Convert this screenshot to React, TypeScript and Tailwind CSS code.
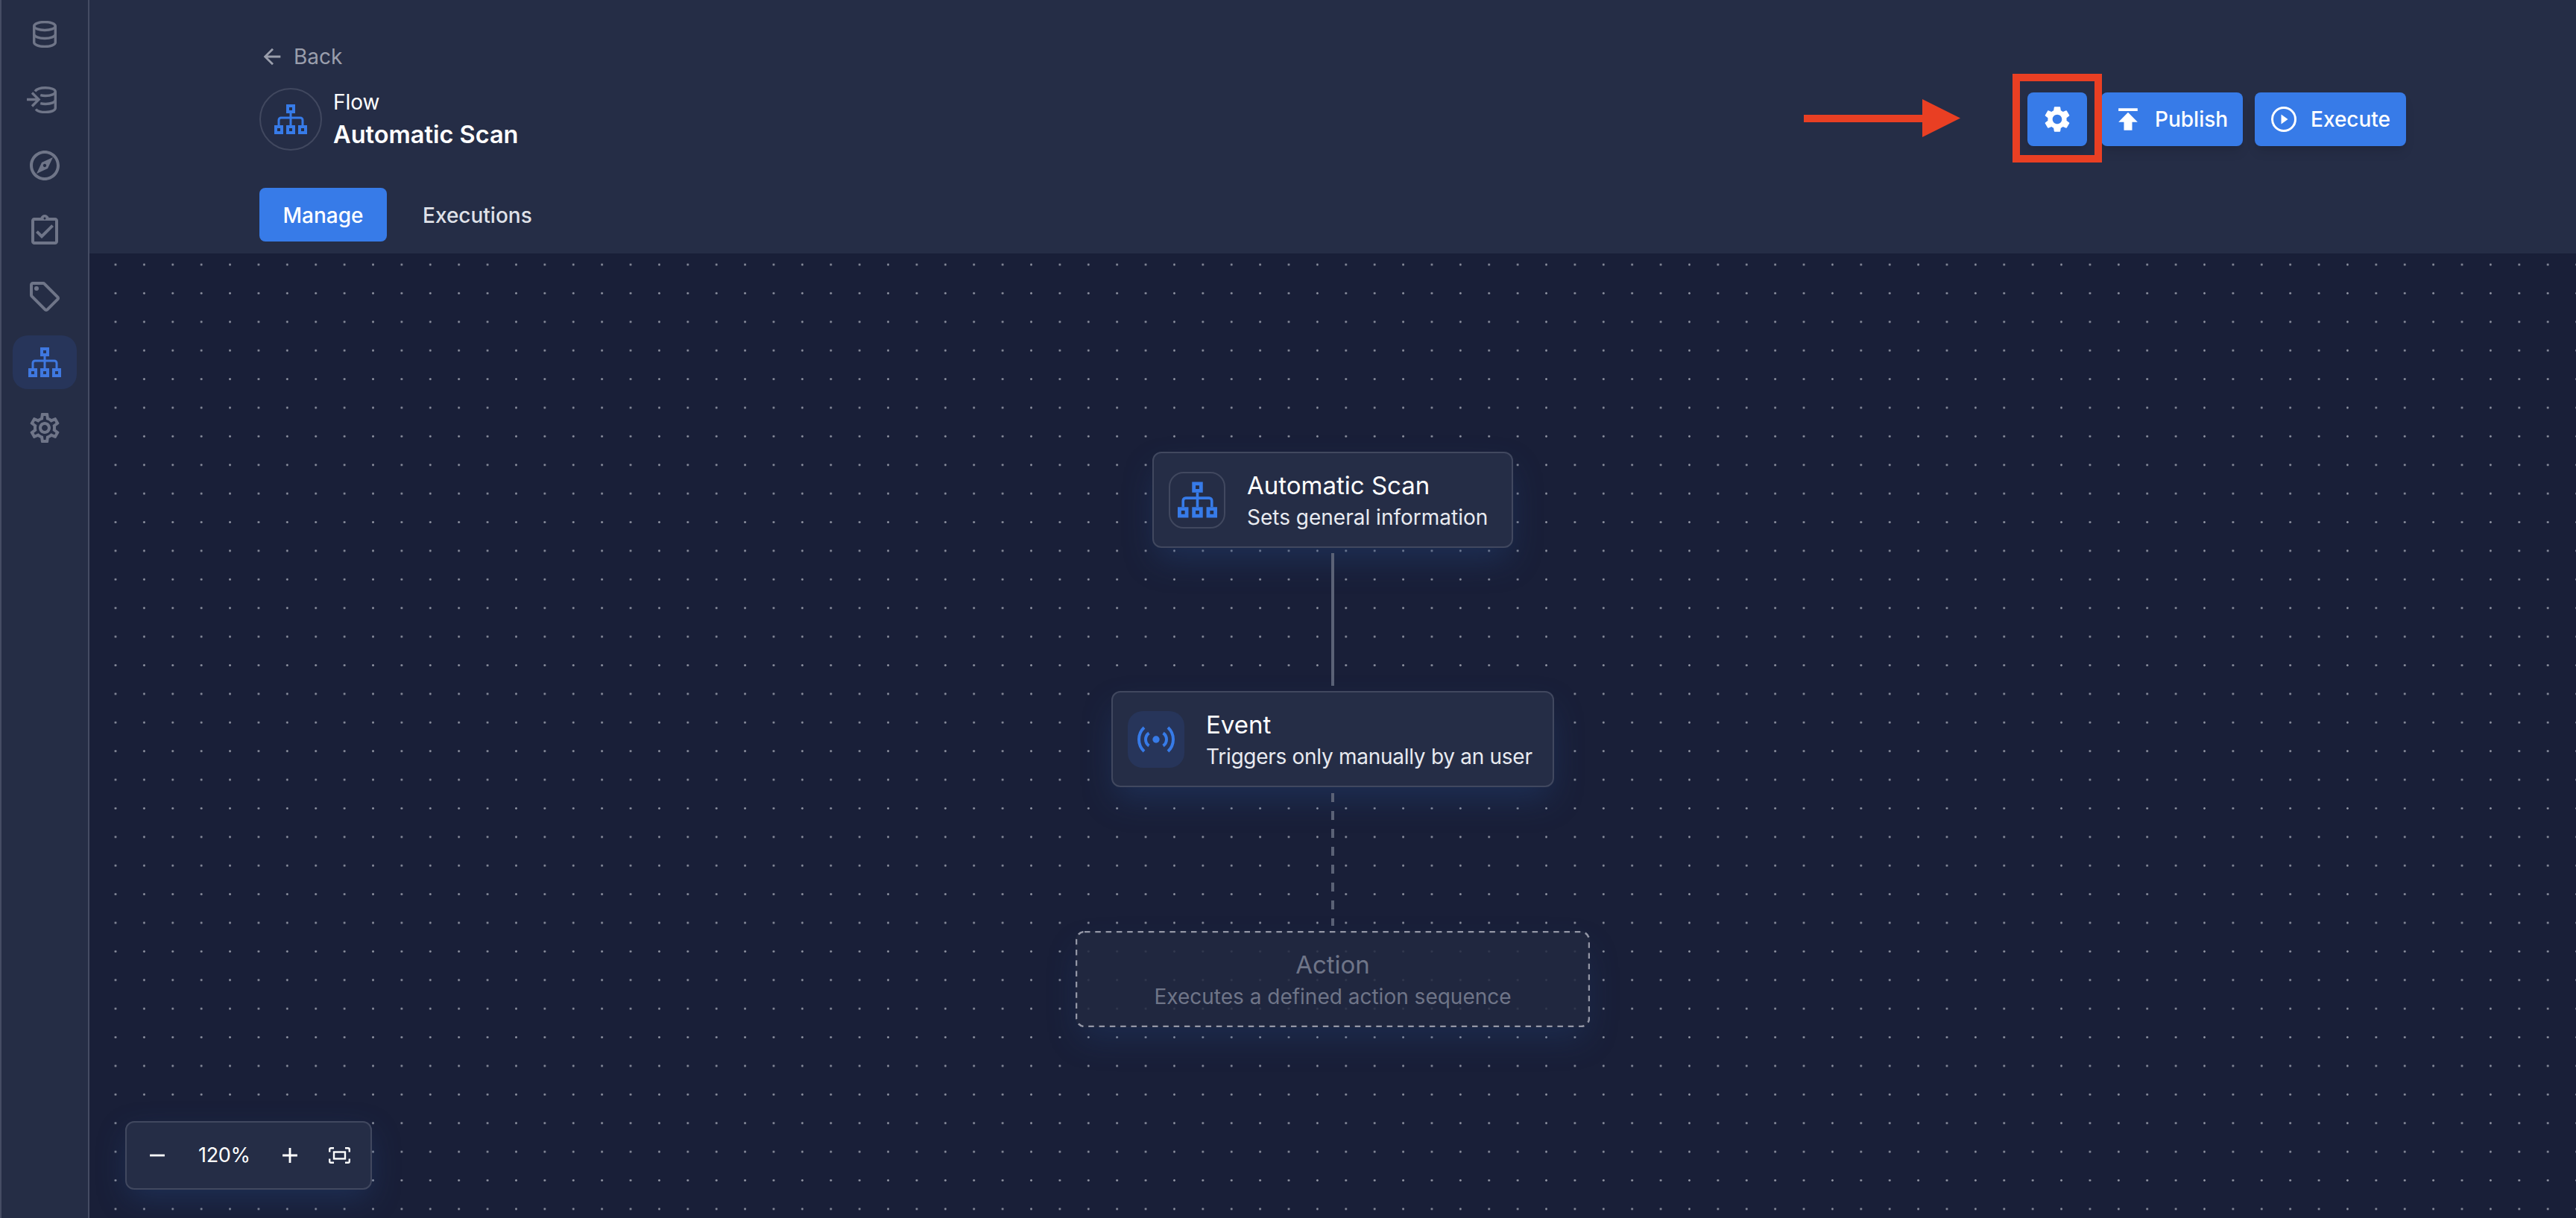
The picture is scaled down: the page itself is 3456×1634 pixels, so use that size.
import {
  MdAdd,
  MdArrowBack,
  MdOutlineAssignmentTurnedIn,
  MdOutlineExplore,
  MdOutlineLocalOffer,
  MdOutlineSettings,
  MdPublish,
  MdRemove,
  MdSettings,
} from "react-icons/md";

function TreeIcon({ className }: { className?: string }) {
  return (
    <svg viewBox="0 0 44 40" className={className} fill="currentColor">
      <path
        fillRule="evenodd"
        d="M16 0h12v12H16zM20 4v4h4V4zM0 28h12v12H0zM4 32v4h4v-4zM16 28h12v12H16zM20 32v4h4v-4zM32 28h12v12H32zM36 32v4h4v-4z"
      />
      <path
        d="M22 12v16M6 28v-7a3 3 0 0 1 3-3h26a3 3 0 0 1 3 3v7"
        fill="none"
        stroke="currentColor"
        strokeWidth="3"
      />
    </svg>
  );
}

function DatabaseIcon({ className }: { className?: string }) {
  return (
    <svg viewBox="0 0 32 36" className={className} fill="none" stroke="currentColor" strokeWidth="3.4">
      <ellipse cx="16" cy="7" rx="14.300" ry="5.500" />
      <path d="M1.700 7v22c0 3 6.400 5.500 14.300 5.500S30.300 32 30.300 29V7" />
      <path d="M1.700 18c0 3 6.400 5.500 14.300 5.500S30.300 21 30.300 18" />
    </svg>
  );
}

function DatabaseInIcon({ className }: { className?: string }) {
  return (
    <svg viewBox="0 0 40 36" className={className} fill="none" stroke="currentColor" strokeWidth="3.4">
      <path d="M11 6.500C13 3.500 18 1.700 25 1.700c7.800 0 13.300 2.400 13.300 5.300S32.800 12.500 25 12.500c-2.600 0-4.800-.3-6.800-.8" />
      <path d="M38.300 7v22c0 3-5.500 5.500-13.300 5.500-6 0-11-1.500-13-4" />
      <path d="M38.300 18c0 3-5.500 5.500-13.300 5.500-2.400 0-4.800-.3-6.800-.8" />
      <path d="M0 17.500h15.500M7 8.500l9 9-9 9" />
    </svg>
  );
}

function PlayCircleIcon({ className }: { className?: string }) {
  return (
    <svg viewBox="0 0 34 34" className={className}>
      <circle cx="17" cy="17" r="15.500" fill="none" stroke="currentColor" strokeWidth="3" />
      <path d="M13.500 10.500v13l9-6.500z" fill="currentColor" />
    </svg>
  );
}

function SignalIcon({ className }: { className?: string }) {
  return (
    <svg viewBox="-25 -18 50 36" className={className} fill="none" stroke="currentColor" strokeWidth="4">
      <circle cx="0" cy="0" r="4.700" fill="currentColor" stroke="none" />
      <path d="M-16 -16A21.800 21.800 0 0 0 -16 16M16 -16A21.800 21.800 0 0 1 16 16" />
      <path d="M-9.500 -8.500A10.300 10.300 0 0 0 -9.500 8.500M9.500 -8.500A10.300 10.300 0 0 1 9.500 8.500" />
    </svg>
  );
}

function FocusIcon({ className }: { className?: string }) {
  return (
    <svg viewBox="0 0 29 22" className={className} fill="none" stroke="currentColor" strokeWidth="2.400">
      <path d="M1.200 6.500V3a1.800 1.800 0 0 1 1.800-1.800h4M22 1.200h4A1.800 1.800 0 0 1 27.800 3v3.500M27.800 15.500V19a1.800 1.800 0 0 1-1.800 1.800h-4M7 20.800H3A1.800 1.800 0 0 1 1.200 19v-3.500" />
      <rect x="7" y="6.500" width="15" height="9" />
    </svg>
  );
}

function NavItem({ children, active }: { children: React.ReactNode; active?: boolean }) {
  return (
    <div
      className={
        active
          ? "flex h-[72px] w-[86px] items-center justify-center rounded-[20px] bg-[#27355a] text-[#3f78e0]"
          : "flex h-[72px] w-[86px] items-center justify-center text-[#6f7588]"
      }
    >
      {children}
    </div>
  );
}

function Sidebar() {
  return (
    <aside className="flex h-full w-[120px] shrink-0 flex-col items-center gap-4 border-x-2 border-[#454c63] bg-[#252d45] pt-2.5">
      <NavItem>
        <DatabaseIcon className="h-9 w-8" />
      </NavItem>
      <NavItem>
        <DatabaseInIcon className="h-9 w-10 -translate-x-1" />
      </NavItem>
      <NavItem>
        <MdOutlineExplore size={48} />
      </NavItem>
      <NavItem>
        <MdOutlineAssignmentTurnedIn size={48} />
      </NavItem>
      <NavItem>
        <MdOutlineLocalOffer size={48} />
      </NavItem>
      <NavItem active>
        <TreeIcon className="h-10 w-11" />
      </NavItem>
      <NavItem>
        <MdOutlineSettings size={48} />
      </NavItem>
    </aside>
  );
}

function Header() {
  return (
    <header className="flex h-[340px] items-start justify-between bg-[#252d46] px-[228px]">
      <div className="pt-[56px]">
        <div className="flex h-10 items-center gap-[12px] text-[28px] text-[#9a9eac]">
          <MdArrowBack size={34} />
          <span>Back</span>
        </div>
        <div className="mt-[22px] flex items-center gap-[15px]">
          <div className="flex size-[84px] items-center justify-center rounded-full border-2 border-[#41485f] text-[#377be8]">
            <TreeIcon className="h-10 w-11" />
          </div>
          <div>
            <div className="text-[28px] leading-[38px] text-white">Flow</div>
            <div className="mt-1 text-[32.500px] leading-[42px] font-semibold text-white">Automatic Scan</div>
          </div>
        </div>
        <div className="mt-[50px] flex items-center gap-[48px]">
          <button className="h-[72px] w-[171px] rounded-lg bg-[#377be8] pt-0.5 text-[28px] font-medium text-white">
            Manage
          </button>
          <span className="pt-0.5 text-[28px] font-medium text-[#dfe1e8]">Executions</span>
        </div>
      </div>
      <div className="mt-[124px] flex items-center">
        <button className="flex h-[72px] w-20 items-center justify-center rounded-lg bg-[#377be8] text-white shadow-lg">
          <MdSettings size={42} />
        </button>
        <button className="ml-[19px] flex h-[72px] w-[190px] items-center gap-[14px] rounded-lg bg-[#377be8] pl-[14px] text-[28px] font-medium text-white shadow-lg">
          <MdPublish size={44} />
          Publish
        </button>
        <button className="ml-4 flex h-[72px] w-[203px] items-center gap-[19px] rounded-lg bg-[#377be8] pl-[22px] text-[28px] font-medium text-white shadow-lg">
          <PlayCircleIcon className="size-[34px]" />
          Execute
        </button>
      </div>
    </header>
  );
}

function Node({
  icon,
  title,
  subtitle,
  className,
  subtitleClassName,
}: {
  icon: React.ReactNode;
  title: string;
  subtitle: string;
  className: string;
  subtitleClassName?: string;
}) {
  return (
    <div
      className={`flex h-[129px] items-center gap-[29px] rounded-xl border-2 border-[#41485f] bg-[#252d46] pl-5 shadow-[0_20px_44px_-6px_rgba(38,72,130,0.4)] ${className}`}
    >
      {icon}
      <div>
        <div className="text-[33px] leading-[44px] text-white">{title}</div>
        <div className={`mt-0.5 text-[28px] leading-[38px] text-[#e8eaf0] ${subtitleClassName ?? ""}`}>{subtitle}</div>
      </div>
    </div>
  );
}

function ActionNode() {
  return (
    <div className="relative flex h-[129px] w-[690px] flex-col items-center justify-center rounded-xl bg-[#222941]/85 shadow-[0_20px_44px_-6px_rgba(38,72,130,0.3)]">
      <svg className="absolute inset-0 size-full" viewBox="0 0 690 129" fill="none">
        <rect x="1" y="1" width="688" height="127" rx="11" stroke="#9497a6" strokeWidth="2.500" strokeDasharray="7.500 6.800" />
      </svg>
      <div className="text-[33px] leading-[44px] text-[#6f7588]">Action</div>
      <div className="mt-0.5 text-[28px] leading-[38px] text-[#6f7588]">Executes a defined action sequence</div>
    </div>
  );
}

function ZoomControls() {
  return (
    <div className="absolute bottom-[38px] left-12 flex h-[92px] w-[331px] items-center rounded-xl border-2 border-[#41485f] bg-[#252d46] pl-6 text-white shadow-[0_14px_40px_-4px_rgba(38,72,130,0.4)]">
      <MdRemove size={34} />
      <span className="ml-[38px] text-[27px] tracking-[-0.3px]">120%</span>
      <MdAdd size={34} className="ml-9" />
      <FocusIcon className="ml-[35px] h-[22px] w-[29px]" />
    </div>
  );
}

export default function App() {
  return (
    <div className="relative flex h-screen w-full overflow-hidden bg-[#191f38] font-['Inter',sans-serif]">
      <Sidebar />
      <main className="flex min-w-0 flex-1 flex-col">
        <Header />
        <section className="relative flex flex-1 flex-col items-center bg-[#191f38] bg-[radial-gradient(circle,#9094a3_1px,transparent_1.7px)] bg-[size:38.4px_38.4px] bg-[position:15.8px_-4.2px] pt-[266px]">
          <Node
            className="w-[484px]"
            title="Automatic Scan"
            subtitle="Sets general information"
            icon={
              <div className="flex size-[76px] items-center justify-center rounded-[20px] border-2 border-[#41485f] text-[#377be8]">
                <TreeIcon className="h-[49px] w-[53px]" />
              </div>
            }
          />
          <div className="mt-[7px] h-[178px] w-1 bg-[#5b6276]" />
          <Node
            className="mt-[7px] w-[594px]"
            title="Event"
            subtitle="Triggers only manually by an user"
            subtitleClassName="tracking-[-0.28px]"
            icon={
              <div className="flex size-[76px] items-center justify-center rounded-[20px] bg-[#27355a] text-[#377be8]">
                <SignalIcon className="h-9 w-[50px]" />
              </div>
            }
          />
          <div className="mt-2 h-[178px] w-1 bg-[repeating-linear-gradient(to_bottom,#5b6276_0,#5b6276_12px,transparent_12px,transparent_24px)]" />
          <div className="mt-[7px]">
            <ActionNode />
          </div>
          <ZoomControls />
        </section>
      </main>

      {/* annotation drawn over the screenshot */}
      <div className="absolute top-[99px] left-[2700px] h-[119px] w-[120px] border-[10px] border-[#e93f23]" />
      <svg className="absolute top-[133px] left-[2420px] h-[51px] w-[210px]" viewBox="0 0 210 51">
        <path d="M0 21h159V0l51 25.500-51 25.500V31H0z" fill="#e93f23" />
      </svg>
    </div>
  );
}
